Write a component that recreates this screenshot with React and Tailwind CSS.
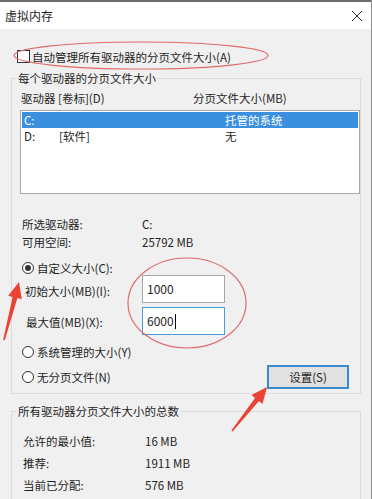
import React from "react";

function Radio({ checked }) {
  return (
    <span className="flex h-[12px] w-[12px] shrink-0 items-center justify-center rounded-full border border-[#333] bg-white">
      {checked && <span className="h-[6px] w-[6px] rounded-full bg-[#333]" />}
    </span>
  );
}

function InfoRow({ label, value, h, labelW }) {
  return (
    <div className={`flex items-center ${h}`}>
      <span className={labelW}>{label}</span>
      <span>{value}</span>
    </div>
  );
}

export default function App() {
  return (
    <div className="relative h-[499px] w-[372px] overflow-hidden border-r border-[#8f8f8f] bg-[#f0f0f0] font-['Noto_Sans_CJK_SC','Noto_Sans',sans-serif] text-[11.5px] leading-[16px] text-[#1e1e1e]">
      <div className="h-[2px] bg-[#6e6e6e]" />
      <div className="flex h-[27px] items-center justify-between bg-white pl-[5px] pr-[9px]">
        <span className="text-[12px]">虚拟内存</span>
        <svg width="10" height="10" viewBox="0 0 10 10" className="block">
          <path d="M0 0L10 10M10 0L0 10" stroke="#333" strokeWidth="1" />
        </svg>
      </div>

      <div className="pl-[11px] pr-[10px]">
        <div className="mt-[20px] ml-[6px] flex h-[15px] items-center gap-[1px]">
          <span className="h-[13px] w-[13px] shrink-0 border border-[#333] bg-white" />
          <span className="ml-[1px]">自动管理所有驱动器的分页文件大小(A)</span>
        </div>

        <fieldset className="mt-[6px] border border-[#dcdcdc] p-0">
          <legend className="ml-[5px] px-[1px] leading-[16px]">每个驱动器的分页文件大小</legend>
          <div className="pl-[1px] pb-[4px]">
            <div className="mt-[4px] flex h-[16px] items-center pl-[8px]">
              <span className="w-[172px]">驱动器 [卷标](D)</span>
              <span>分页文件大小(MB)</span>
            </div>
            <div className="mt-[4px] ml-[7px] h-[84px] w-[340px] border border-[#a8a8a8] bg-white p-[1px]">
              <div className="flex h-[16px] items-center bg-[#3a8fde] pl-[2px] text-white">
                <span className="w-[35px]">C:</span>
                <span className="w-[166px]"></span>
                <span>托管的系统</span>
              </div>
              <div className="flex h-[16px] items-center pl-[2px]">
                <span className="w-[35px]">D:</span>
                <span className="w-[166px]">[软件]</span>
                <span>无</span>
              </div>
            </div>

            <div className="mt-[21px] pl-[9px]">
              <InfoRow label="所选驱动器:" value="C:" h="h-[18px]" labelW="w-[120px]" />
              <InfoRow label="可用空间:" value="25792 MB" h="h-[18px]" labelW="w-[120px]" />
            </div>

            <div className="mt-[9px] flex h-[16px] items-center gap-[3px] pl-[9px]">
              <Radio checked />
              <span>自定义大小(C):</span>
            </div>

            <div className="mt-[-1px] flex h-[28px] items-center pl-[12px]">
              <span className="w-[117px] pt-[3px]">初始大小(MB)(I):</span>
              <div className="flex h-[28px] w-[83px] items-center border border-[#a6a6a6] bg-white pl-[4px] text-[12px]">
                1000
              </div>
            </div>
            <div className="mt-[4px] flex h-[28px] items-center pl-[13px]">
              <span className="w-[116px] pt-[2px]">最大值(MB)(X):</span>
              <div className="flex h-[28px] w-[83px] items-center border border-[#4a9bd1] bg-white pl-[4px] text-[12px]">
                6000
                <span className="ml-[1px] h-[15px] w-px bg-black" />
              </div>
            </div>

            <div className="mt-[9px] flex h-[16px] items-center gap-[3px] pl-[9px]">
              <Radio />
              <span>系统管理的大小(Y)</span>
            </div>

            <div className="mt-[5px] flex h-[24px] items-center justify-between pl-[9px] pr-[11px]">
              <div className="flex items-center gap-[3px]">
                <Radio />
                <span>无分页文件(N)</span>
              </div>
              <button className="flex h-[24px] w-[82px] items-center justify-center border-2 border-[#3a8bd0] bg-[#e1e1e1] text-[11.5px] text-[#1e1e1e]">
                设置(S)
              </button>
            </div>
          </div>
        </fieldset>

        <fieldset className="mt-[9px] border border-[#dcdcdc] p-0 pb-[30px]">
          <legend className="ml-[5px] px-[1px] leading-[16px]">所有驱动器分页文件大小的总数</legend>
          <div className="mt-[11px] pl-[11px]">
            <InfoRow label="允许的最小值:" value="16 MB" h="h-[22px]" labelW="w-[122px]" />
            <InfoRow label="推荐:" value="1911 MB" h="h-[22px]" labelW="w-[122px]" />
            <InfoRow label="当前已分配:" value="576 MB" h="h-[22px]" labelW="w-[122px]" />
          </div>
        </fieldset>
      </div>

      <svg
        className="pointer-events-none absolute left-0 top-0"
        width="372"
        height="499"
        viewBox="0 0 372 499"
      >
        <ellipse cx="141" cy="55.5" rx="127" ry="13.5" fill="none" stroke="#df6b6b" strokeWidth="1.2" />
        <ellipse cx="187" cy="303" rx="59" ry="45" fill="none" stroke="#df6b6b" strokeWidth="1.2" />
        <polygon
          points="19,282 21.8,299.2 17.4,298.1 4.8,340.2 3.2,339.8 12.6,296.9 8.2,295.8"
          fill="#ea4335"
        />
        <polygon
          points="267,387 262.5,403.9 259,401.1 232.6,431.5 231.4,430.5 255,397.9 251.5,395.1"
          fill="#ea4335"
        />
      </svg>
    </div>
  );
}
